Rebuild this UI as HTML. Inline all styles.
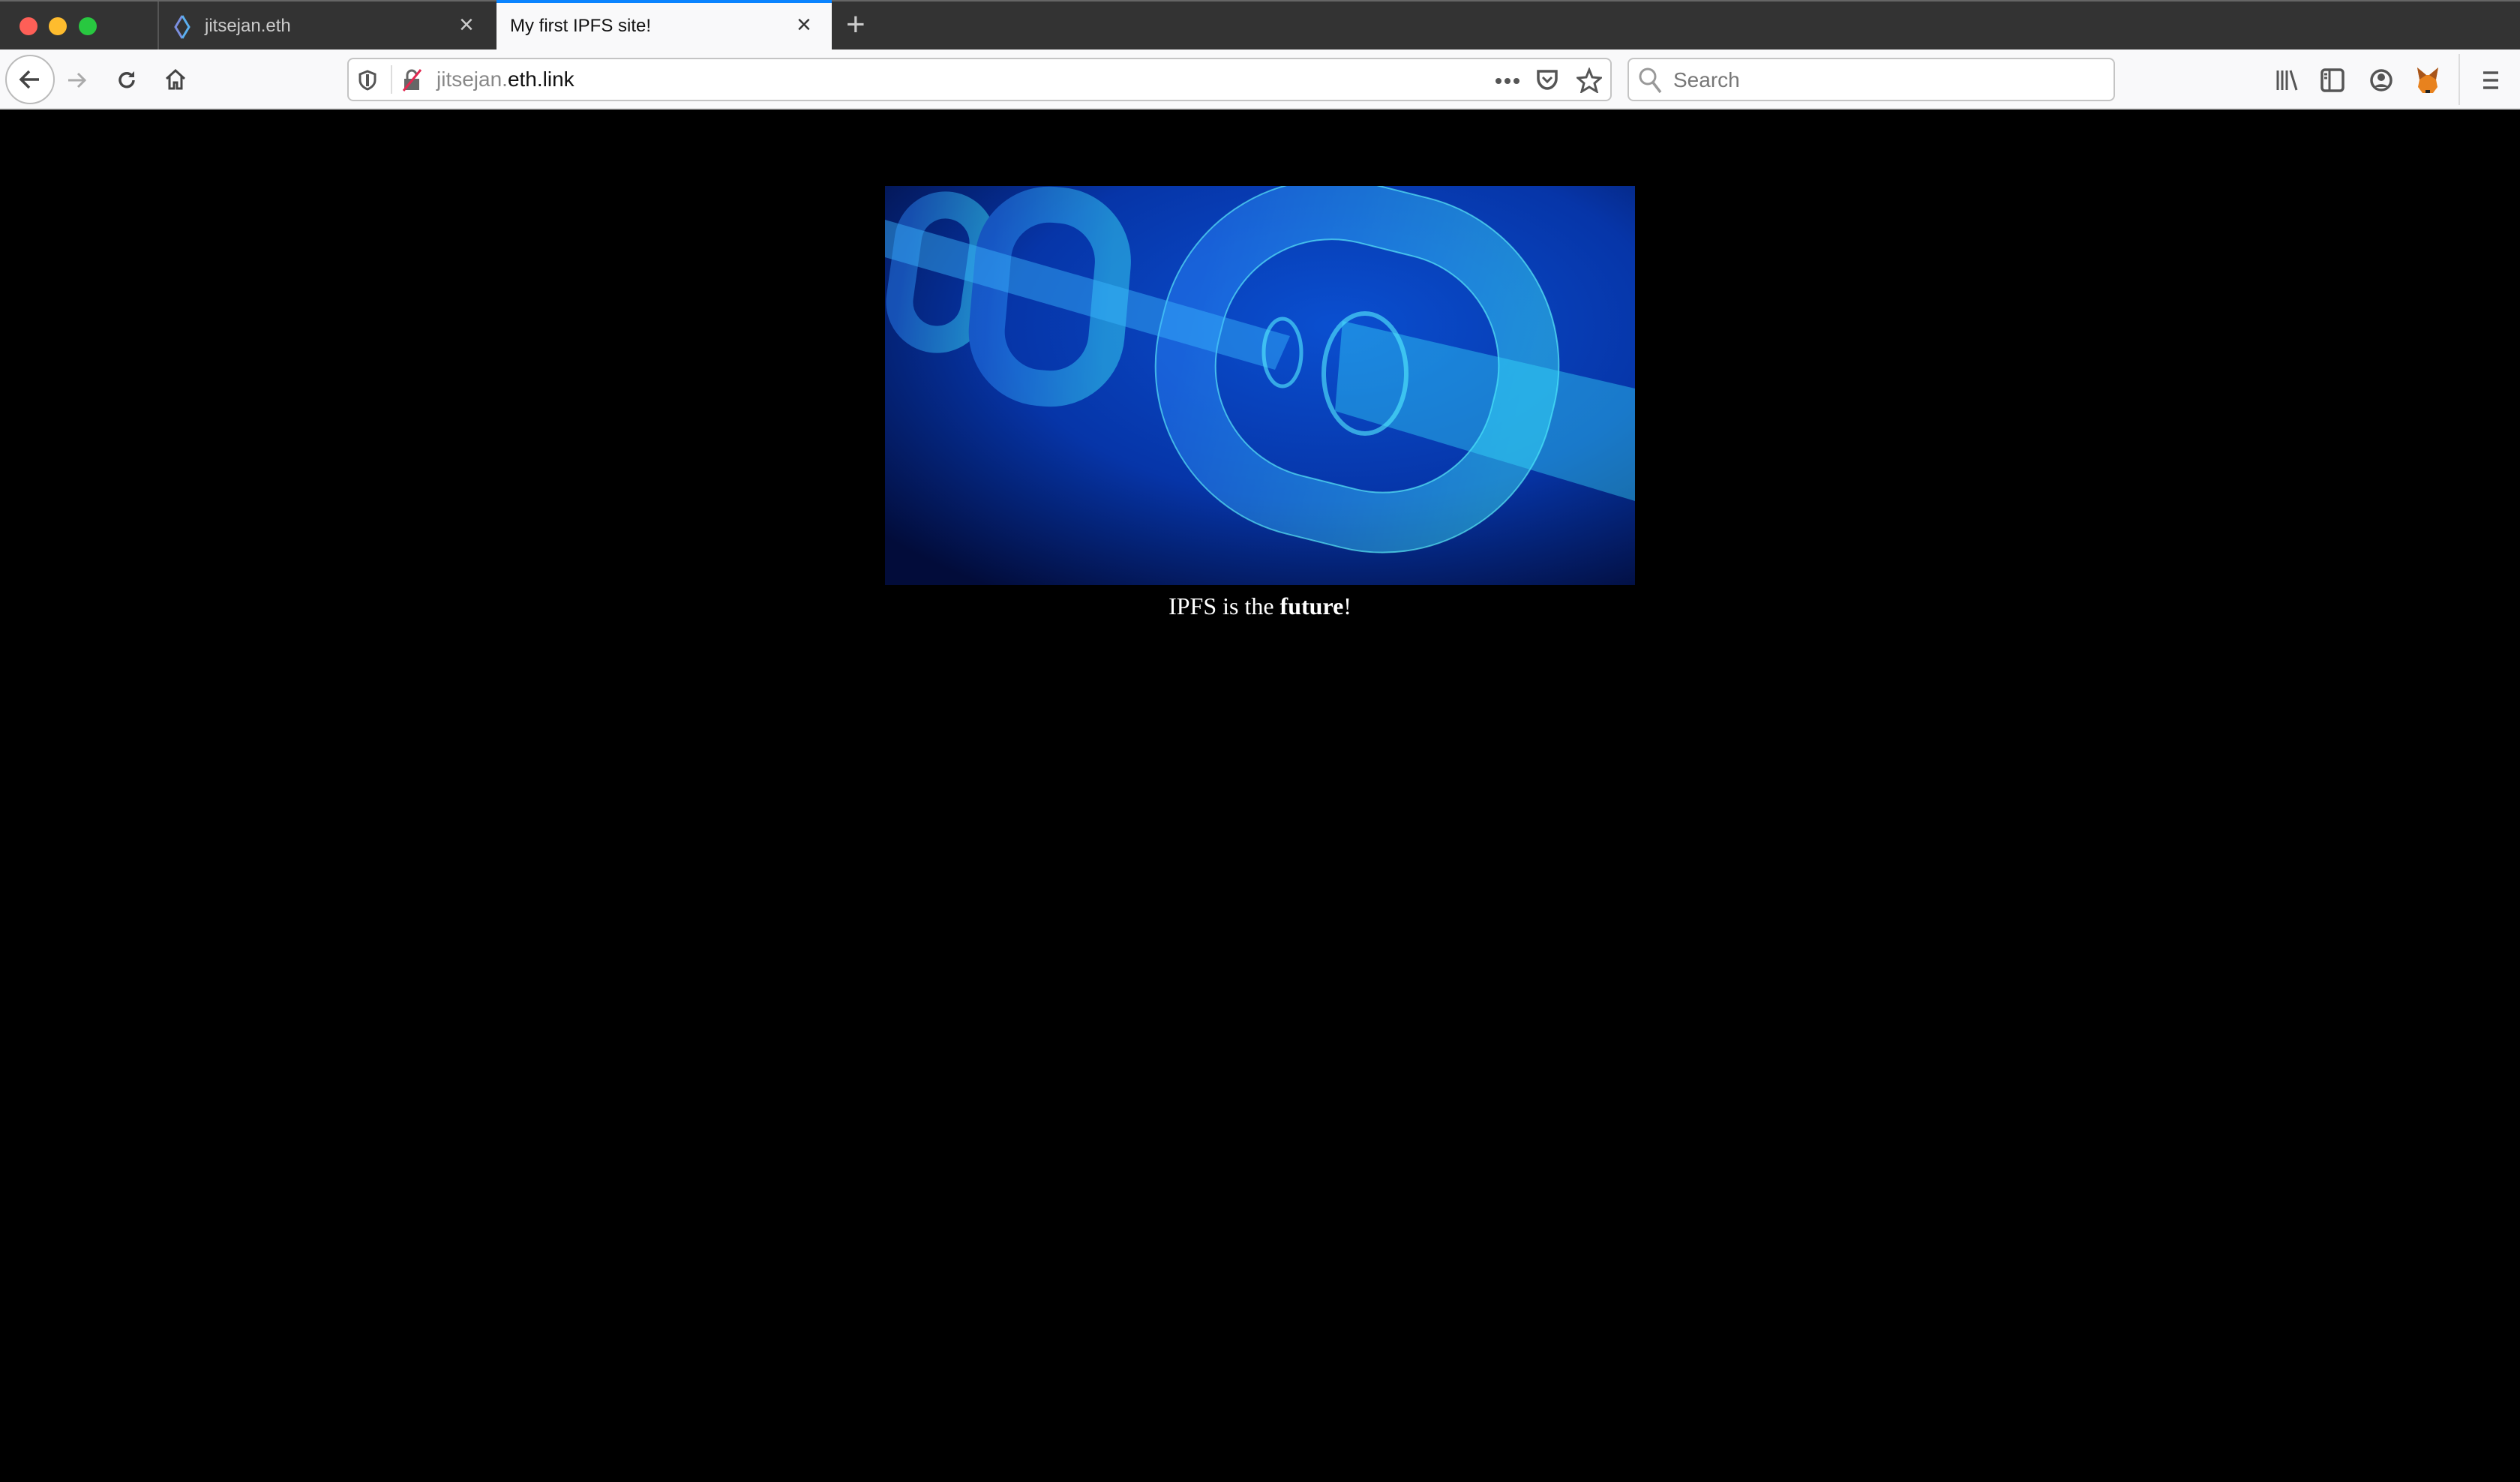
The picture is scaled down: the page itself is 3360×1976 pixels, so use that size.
<!DOCTYPE html>
<html><head><meta charset="utf-8"><style>
*{margin:0;padding:0;box-sizing:border-box}
body{width:3360px;height:1976px;background:#000;overflow:hidden;font-family:"Liberation Sans",sans-serif;position:relative}
.tabs{position:absolute;left:0;top:0;width:3360px;height:66px;background:#333;border-top:2px solid #666}
.dot{position:absolute;top:21px;width:24px;height:24px;border-radius:50%}
.toolbar{position:absolute;left:0;top:66px;width:3360px;height:80px;background:#f9f9fa;border-bottom:2px solid #ddd}
.a{position:absolute}
.field{position:absolute;top:11px;height:58px;background:#fff;border:2px solid #c4c4c4;border-radius:8px}
</style></head><body>
<div class="tabs">
 <div class="dot" style="left:26px;background:#fe5f57"></div>
 <div class="dot" style="left:65px;background:#febc2e"></div>
 <div class="dot" style="left:105px;background:#28c840"></div>
 <div class="a" style="left:210px;top:0;width:2px;height:64px;background:#555"></div>
 <svg class="a" style="left:230px;top:18px" width="26" height="32" viewBox="0 0 26 32"><path d="M13 1 L4 16 L13 31" stroke="#7b8fe0" stroke-width="3" fill="none"/><path d="M13 1 L22 16 L13 31" stroke="#5ab0f0" stroke-width="3" fill="none"/></svg>
 <div class="a" style="left:273px;top:19px;color:#ccc;font-size:24px">jitsejan.eth</div>
 <div class="a" style="left:612px;top:12px;color:#ccc;font-size:34px">×</div>
 <div class="a" style="left:662px;top:-2px;width:447px;height:66px;background:#f9f9fa;border-top:4px solid #0a84ff"></div>
 <div class="a" style="left:680px;top:19px;color:#111;font-size:24px">My first IPFS site!</div>
 <div class="a" style="left:1062px;top:12px;color:#333;font-size:34px">×</div>
 <div class="a" style="left:1128px;top:6px;color:#ccc;font-size:44px">+</div>
</div>
<div class="toolbar">
 <div class="a" style="left:7px;top:7px;width:66px;height:66px;border-radius:50%;border:2px solid #bbb;background:#fff"></div>
 <svg class="a" style="left:22px;top:22px" width="36" height="36" viewBox="0 0 36 36"><path d="M30 18H7M17 7L6 18l11 11" stroke="#444" stroke-width="3.5" fill="none"/></svg>
 <svg class="a" style="left:88px;top:26px" width="30" height="30" viewBox="0 0 30 30"><path d="M3 15h22M16 6l9 9-9 9" stroke="#aaa" stroke-width="3" fill="none"/></svg>
 <svg class="a" style="left:154px;top:26px" width="30" height="30" viewBox="0 0 30 30"><path d="M24 15a9 9 0 1 1-3-7" stroke="#444" stroke-width="3.5" fill="none"/><path d="M25 3v8h-8z" fill="#444"/></svg>
 <svg class="a" style="left:218px;top:24px" width="32" height="32" viewBox="0 0 32 32"><path d="M4 15L16 4l12 11M8 12v16h6v-8h4v8h6V12" stroke="#444" stroke-width="3" fill="none"/></svg>
 <div class="field" style="left:463px;width:1686px">
  <svg class="a" style="left:12px;top:14px" width="26" height="28" viewBox="0 0 26 28"><path d="M13 2L3 6v8c0 6 5 10 10 12 5-2 10-6 10-12V6z" stroke="#555" stroke-width="3" fill="none"/><path d="M13 6v16" stroke="#555" stroke-width="4"/></svg>
  <div class="a" style="left:56px;top:8px;width:2px;height:38px;background:#ddd"></div>
  <svg class="a" style="left:70px;top:12px" width="30" height="32" viewBox="0 0 30 32"><rect x="4" y="14" width="20" height="15" fill="#666"/><path d="M8 14V9a6 6 0 0 1 12 0" stroke="#666" stroke-width="3" fill="none"/><path d="M26 2L3 30" stroke="#e22850" stroke-width="3"/></svg>
  <div class="a" style="left:117px;top:11px;font-size:28px;color:#888">jitsejan.<span style="color:#111">eth.link</span></div>
  <svg class="a" style="left:1528px;top:24px" width="34" height="10" viewBox="0 0 34 10"><circle cx="5" cy="5" r="4" fill="#555"/><circle cx="17" cy="5" r="4" fill="#555"/><circle cx="29" cy="5" r="4" fill="#555"/></svg>
  <svg class="a" style="left:1583px;top:12px" width="30" height="32" viewBox="0 0 30 32"><path d="M3 4h24v10c0 7-6 13-12 13S3 21 3 14z" stroke="#555" stroke-width="3.5" fill="none"/><path d="M9 12l6 6 6-6" stroke="#555" stroke-width="3" fill="none"/></svg>
  <svg class="a" style="left:1637px;top:11px" width="34" height="34" viewBox="0 0 34 34"><path d="M17 3l4 10 11 1-8 7 3 11-10-6-10 6 3-11-8-7 11-1z" stroke="#555" stroke-width="3" fill="none"/></svg>
 </div>
 <div class="field" style="left:2170px;width:650px">
  <svg class="a" style="left:12px;top:10px" width="34" height="36" viewBox="0 0 34 36"><circle cx="13" cy="13" r="10" stroke="#999" stroke-width="3" fill="none"/><path d="M20 21l10 13" stroke="#999" stroke-width="3.5"/></svg>
  <div class="a" style="left:59px;top:12px;font-size:28px;color:#777">Search</div>
 </div>
 <svg class="a" style="left:3033px;top:24px" width="36" height="34" viewBox="0 0 36 34"><path d="M4 4v26M10 4v26M16 4v26M21 4l8 26" stroke="#555" stroke-width="3" fill="none"/></svg>
 <svg class="a" style="left:3093px;top:24px" width="34" height="34" viewBox="0 0 34 34"><rect x="3" y="3" width="28" height="28" rx="4" stroke="#555" stroke-width="3.5" fill="none"/><path d="M13 3v28M6 9h4M6 14h4" stroke="#555" stroke-width="3"/></svg>
 <svg class="a" style="left:3159px;top:24px" width="32" height="34" viewBox="0 0 32 34"><circle cx="16" cy="17" r="13" stroke="#555" stroke-width="3.5" fill="none"/><circle cx="16" cy="13" r="5" fill="#555"/><path d="M7 26c3-5 15-5 18 0" fill="#555"/></svg>
 <svg class="a" style="left:3220px;top:22px" width="34" height="38" viewBox="0 0 34 38"><path d="M3 2l12 10h4L31 2l-3 16 2 10-6 8H10l-6-8 2-10z" fill="#e8821e"/><path d="M3 2l12 10-9 6zM31 2L19 12l9 6z" fill="#a8551a"/><path d="M14 32h6v4h-6z" fill="#222"/></svg>
 <div class="a" style="left:3278px;top:6px;width:2px;height:68px;background:#ddd"></div>
 <svg class="a" style="left:3308px;top:26px" width="26" height="30" viewBox="0 0 26 30"><path d="M3 5h20M3 15h20M3 25h20" stroke="#555" stroke-width="3.5"/></svg>
</div>
<svg class="a" style="left:1180px;top:248px" width="1000" height="532" viewBox="0 0 1000 532">
 <defs>
  <radialGradient id="bg" cx="0.6" cy="0.35" r="0.8"><stop offset="0" stop-color="#0a4fd0"/><stop offset="0.55" stop-color="#0635a8"/><stop offset="1" stop-color="#020c3a"/></radialGradient>
  <linearGradient id="c" x1="0" x2="1"><stop offset="0" stop-color="#2e8cff"/><stop offset="1" stop-color="#3ff0ff"/></linearGradient>
 </defs>
 <rect width="1000" height="532" fill="url(#bg)"/>
 <g fill="none" stroke="url(#c)" opacity="0.45">
  <rect x="25" y="25" width="100" height="180" rx="50" stroke-width="36" transform="rotate(8 75 115)"/>
  <rect x="140" y="25" width="160" height="245" rx="75" stroke-width="48" transform="rotate(5 220 145)"/>
  <rect x="402" y="40" width="455" height="400" rx="190" stroke-width="80" transform="rotate(14 630 240)"/>
 </g>
 <g fill="none" stroke="#6ff" stroke-width="2" opacity="0.6">
  <rect x="362" y="0" width="535" height="480" rx="230" transform="rotate(14 630 240)"/>
  <rect x="442" y="80" width="375" height="320" rx="150" transform="rotate(14 630 240)"/>
 </g>
 <path d="M0 45 L540 200 L520 245 L0 95Z" fill="#3ab8ff" opacity="0.45"/>
 <path d="M610 180 L1000 270 L1000 420 L600 300Z" fill="#36e0ff" opacity="0.4"/>
 <ellipse cx="530" cy="222" rx="25" ry="45" fill="none" stroke="#5ef" stroke-width="5" opacity="0.6"/>
 <ellipse cx="640" cy="250" rx="55" ry="80" fill="none" stroke="#5ef" stroke-width="6" opacity="0.6"/>
</svg>
<div class="a" style="left:1180px;top:790px;width:1000px;text-align:center;color:#fff;font-family:'Liberation Serif',serif;font-size:32px">IPFS is the <b>future</b>!</div>
</body></html>
